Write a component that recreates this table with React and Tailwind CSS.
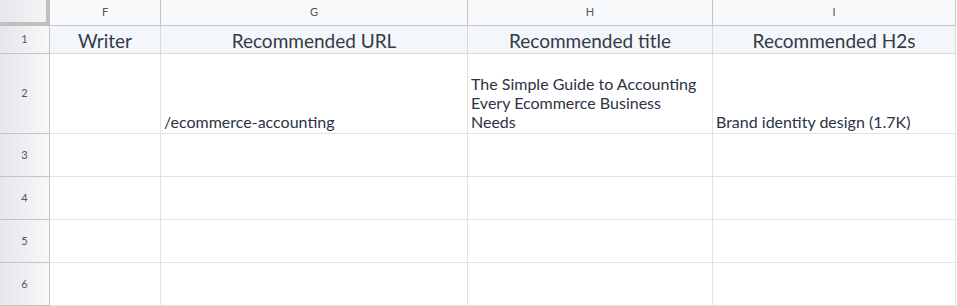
const cols = ["F", "G", "H", "I"]

const headers = ["Writer", "Recommended URL", "Recommended title", "Recommended H2s"]

const rowHeights = ["h-[80px]", "h-[43px]", "h-[43px]", "h-[43px]", "h-[43px]"]

function RowNum({ n, h }) {
  return (
    <div className={`${h} flex items-center justify-center border-r border-b border-[#c4c4c4] bg-gradient-to-r from-[#e4e6e9] to-[#f7f8fa] text-[11px] text-[#555]`}>
      {n}
    </div>
  )
}

export default function App() {
  return (
    <div className="w-[957px] h-[306px] overflow-hidden bg-white font-['Lato','Liberation_Sans',sans-serif] text-[#2b3344]">
      <div className="grid grid-cols-[50px_111px_307px_245px_243px]">
        {/* column letters */}
        <div className="h-[26px] border-r-4 border-b-4 border-[#c0c0c0] bg-gradient-to-r from-[#e6e7ea] to-[#f4f5f7]" />
        {cols.map((c) => (
          <div key={c} className="h-[26px] flex items-center justify-center border-r border-b border-[#c4c4c4] bg-[#f8f9fa] text-[11px] text-[#555]">
            {c}
          </div>
        ))}

        {/* row 1 */}
        <RowNum n={1} h="h-[28px]" />
        {headers.map((t) => (
          <div key={t} className="h-[28px] flex items-center justify-center border-r border-b border-[#dadada] bg-[#f3f7fb] text-[19px] text-[#333a47] leading-none pt-[2px]">
            {t}
          </div>
        ))}

        {/* row 2 */}
        <RowNum n={2} h={rowHeights[0]} />
        <div className="h-[80px] border-r border-b border-[#e2e2e2]" />
        <div className="h-[80px] flex items-end border-r border-b border-[#e2e2e2] px-[3px] pb-[2px] text-[16px] leading-[19px]">
          /ecommerce-accounting
        </div>
        <div className="h-[80px] flex items-end border-r border-b border-[#e2e2e2] px-[3px] pb-[2px] text-[16px] leading-[19px]">
          <span>
            The Simple Guide to Accounting
            <br />
            Every Ecommerce Business
            <br />
            Needs
          </span>
        </div>
        <div className="h-[80px] flex items-end border-r border-b border-[#e2e2e2] px-[3px] pb-[2px] text-[16px] leading-[19px]">
          Brand identity design (1.7K)
        </div>

        {[3, 4, 5, 6].map((n, i) => (
          <div key={n} className="contents">
            <RowNum n={n} h={rowHeights[i + 1]} />
            {cols.map((c) => (
              <div key={c} className="h-[43px] border-r border-b border-[#e2e2e2]" />
            ))}
          </div>
        ))}
      </div>
    </div>
  )
}
